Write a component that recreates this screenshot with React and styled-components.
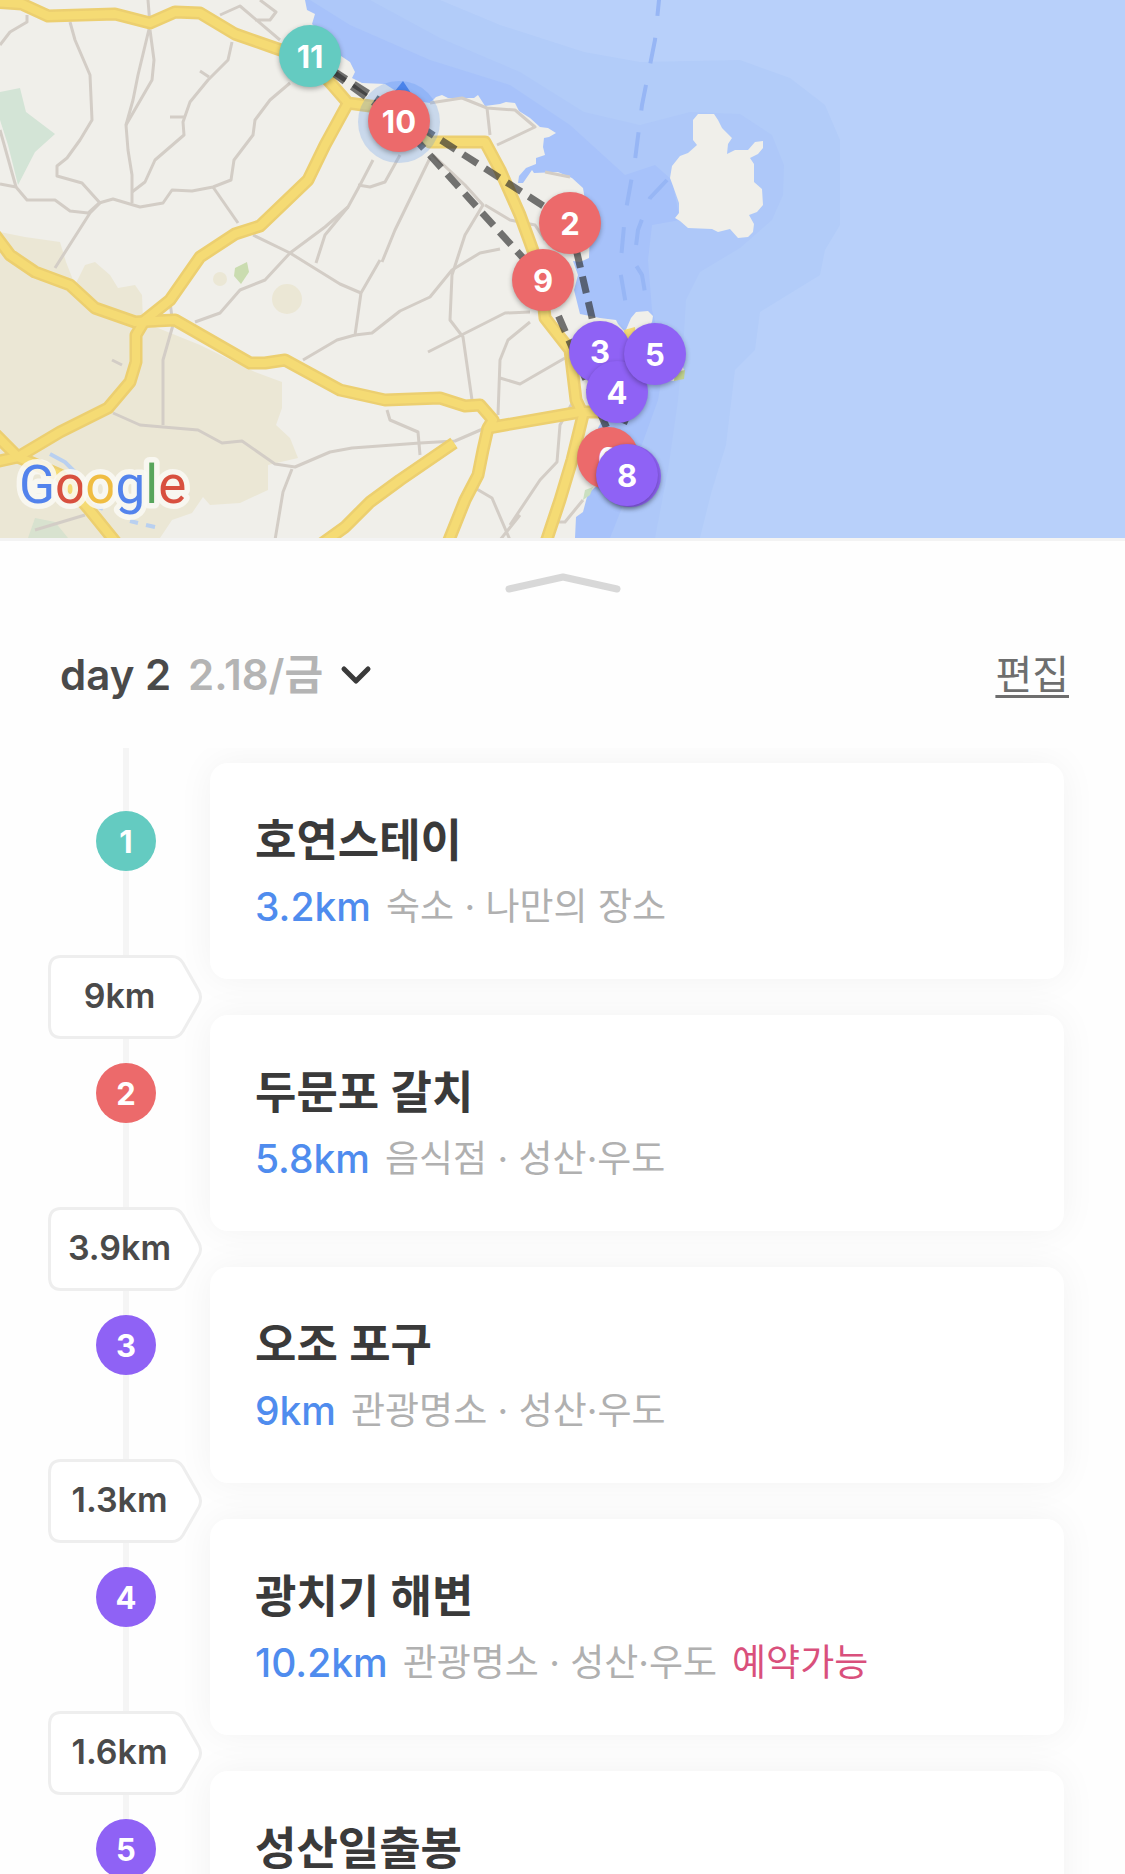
import React from 'react';
import styled, { createGlobalStyle } from 'styled-components';

const TEAL = '#64cbc1';
const RED = '#ec6a6b';
const PURPLE = '#8f62f5';

const pins = [
  { id: 2, x: 570, y: 223, color: RED },
  { id: 9, x: 543, y: 280, color: RED },
  { id: 10, x: 399, y: 121, color: RED },
  { id: 11, x: 310, y: 56, color: TEAL },
  { id: 3, x: 600, y: 352, color: PURPLE },
  { id: 4, x: 617, y: 392, color: PURPLE },
  { id: 5, x: 655, y: 354, color: PURPLE },
  { id: 6, x: 608, y: 458, color: RED },
  { id: 7, x: 630, y: 476, color: PURPLE, covered: true },
  { id: 8, x: 627, y: 475, color: PURPLE },
];

const places = [
  { name: '호연스테이', away: '3.2km', info: '숙소 · 나만의 장소', color: TEAL, next: '9km' },
  { name: '두문포 갈치', away: '5.8km', info: '음식점 · 성산·우도', color: RED, next: '3.9km' },
  { name: '오조 포구', away: '9km', info: '관광명소 · 성산·우도', color: PURPLE, next: '1.3km' },
  { name: '광치기 해변', away: '10.2km', info: '관광명소 · 성산·우도', color: PURPLE, next: '1.6km', booking: '예약가능' },
  { name: '성산일출봉', color: PURPLE },
];

const mainRoads = [
  'M-5 2L22 4L48 16L115 14L150 23L175 12L200 13L235 34L275 48L310 60L335 88L348 103L385 108L430 142L485 142L500 170L520 215L540 270L545 318L570 350L576 400L583 415L572 460L560 500L545 545',
  'M348 103L325 145L308 180L260 226L235 234L200 257L170 300L145 320L136 335L136 362L130 382L108 408L60 432L18 457L-5 462',
  'M-5 235L10 255L35 272L70 285L95 308L135 322L175 320L250 363L265 363L285 360L340 390L385 400L440 398L465 406L480 405L493 420L488 428L580 412L606 412',
  'M488 428L483 450L478 475L465 500L447 545',
  'M454 443L400 480L370 502L345 527L320 545',
  'M-5 434L18 457L60 475L88 508L118 545',
];

const lanes = [
  'M27 15L27 22L10 32L0 45',
  'M70 22L75 40L90 75L92 120L80 140L67 158L57 166L57 176L82 183L100 203L90 213L55 268',
  'M148 0L150 25L138 75L133 100L126 125L128 150L132 175L132 203',
  'M150 30L154 60L152 80L126 125',
  'M232 42L228 60L208 80L190 102L183 122L184 135L155 160L145 182L132 192',
  'M170 117L184 117M200 71L209 77',
  'M290 83L270 100L255 120L253 135L234 160L231 180L213 187L192 191L172 190L163 203L140 207L113 199L99 203L88 213L70 211L55 200L27 200L16 187L0 184',
  'M0 130L16 187',
  'M213 187L238 223',
  'M253 235L290 253L340 284L361 293',
  'M220 15L240 6L280 40M260 0L276 12L270 20L255 20',
  'M373 160L360 185L348 207L325 227L290 253L265 280L240 290L220 313L195 322',
  'M400 155L385 182L370 187L358 185',
  'M348 207L325 235L316 263',
  'M430 158L395 230L382 262M380 260L361 293L355 335L337 340L303 360',
  'M355 335L372 333L400 311L430 297L452 270L480 253L500 249',
  'M433 155L465 185L483 205L465 235L452 275L450 320L463 337L472 400',
  'M428 352L505 313L530 312M497 145L535 127L515 110L487 108L462 98L430 103',
  'M487 108L490 135M485 205L510 220L535 225L545 240',
  'M530 322L508 340L500 360L498 415M500 378L520 384L565 358',
  'M170 302L173 325L163 360L163 425',
  'M113 413L140 425L163 427L198 430L222 443L242 441L275 464L295 467L330 452L352 448L420 443L455 441L485 428',
  'M387 410L390 420L418 432L420 455',
  'M292 469L283 492L275 540',
  'M475 488L492 498L510 540M510 525L540 480L557 462L560 425L575 398M520 515L500 540',
  'M570 177L545 172M583 500L565 522L550 522M35 530L85 515',
  'M112 360L122 365',
];

const GlobalStyle = createGlobalStyle`
  * {
    box-sizing: border-box;
  }
  body {
    margin: 0;
    background: #fefefe;
    font-family: Inter, "Noto Sans CJK KR", sans-serif;
  }
`;

function MapDrawing() {
  return (
    <MapSvg viewBox="0 0 1125 538" aria-hidden="true">
      <rect width="1125" height="538" fill="#b8d0fa" />
      <path
        fill="#b2ccf9"
        d="M0 0H440L500 25L584 52L640 62L740 60L790 78L825 105L840 140L840 225L825 250L820 275L760 312L755 350L735 370L726 445L712 490L700 538H0Z"
      />
      <path
        fill="#aec8f9"
        d="M0 0H370L440 38L520 72L584 112L640 125L690 112L740 114L772 135L784 165L783 195L772 220L740 248L700 272L686 300L683 350L678 400L668 470L655 538H0Z"
      />
      <path
        fill="#a7c2fa"
        d="M0 0H310L350 25L430 60L510 85L570 125L625 175L655 165L672 180L680 220L652 225L648 260L652 310L665 360L658 400L640 450L625 500L610 538H0Z"
      />
      <g fill="none" stroke="#97b6f5" strokeWidth="4" strokeDasharray="26 22">
        <path d="M660 -10L655 40L642 105L635 160L625 215L620 270L626 305" />
        <path d="M667 180L650 198L638 230L634 262L642 275L648 310" />
      </g>

      <path
        fill="#f0efea"
        d="M0 0H305L307 10L315 14L312 24L322 34L335 52L350 62L355 72L352 78L362 83L385 84L410 100L430 103L436 97L442 95L448 98L474 98L478 95L485 106L500 104L506 102L515 103L519 111L530 118L540 127L548 128L556 133L549 137L544 138L543 147L545 155L536 158L536 164L526 168L519 176L518 183L523 183L532 170L534 173L558 172L572 178L583 188L590 230L589 258L580 262L573 261L578 275L574 290L580 314L600 318L616 320L618 324L625 332L631 318L636 312L648 311L653 316L652 322L645 332L675 345L684 370L684 378L674 381L640 380L610 405L598 428L602 450L598 485L588 493L583 512L576 517L575 538H0Z"
      />
      <path
        fill="#f0efea"
        d="M693 120L698 114L706 114L714 114L718 120L722 128L732 138L728 144L727 154L735 150L748 150L755 142L763 141L763 148L758 154L750 158L754 164L754 182L762 189L763 205L757 212L749 215L754 224L753 232L748 237L738 238L730 229L718 232L712 229L688 228L680 221L675 218L679 213L679 203L673 186L670 178L672 166L680 156L688 153L697 145L693 140Z"
      />
      <path
        fill="#ebe7d5"
        d="M0 232L25 237L60 242L66 262L75 285L85 265L95 262L110 275L118 288L135 285L142 295L143 322L200 345L255 372L282 382L282 408L276 425L290 438L298 458L268 465L268 490L240 503L210 505L203 497L192 513L172 520L160 538H0Z"
      />
      <circle cx="287" cy="299" r="15" fill="#ebe7d5" />
      <circle cx="220" cy="279" r="7" fill="#ebe7d5" />
      <path fill="#d3e4d6" d="M0 92L20 88L26 112L55 134L35 152L18 185L8 145L0 120Z" />
      <path fill="#cadcb0" d="M235 268L247 262L249 272L241 284L234 276Z" />
      <path fill="#d8e2cf" d="M35 518L55 522L68 538H28Z" />
      <path fill="#c1d290" d="M675 372L685 370L684 379L674 381Z" />
      <path fill="#cadfc0" d="M585 490L593 487L590 495L583 500Z" />
      <path fill="#f4da75" d="M624 330L635 327L636 340L625 342Z" />
      <path fill="none" stroke="#b9d0f0" strokeWidth="4" d="M50 454L65 462L78 475M130 521L138 523M146 525L155 527M94 505L103 509" />

      <g fill="none" stroke="#d3cdc6" strokeWidth="3" strokeLinejoin="round">
        {lanes.map((d) => <path key={d} d={d} />)}
      </g>
      <g fill="none" stroke="#eccf70" strokeWidth="13" strokeLinejoin="round">
        {mainRoads.map((d) => <path key={d} d={d} />)}
      </g>
      <g fill="none" stroke="#f5db74" strokeWidth="8" strokeLinejoin="round">
        {mainRoads.map((d) => <path key={d} d={d} />)}
      </g>

      {/* route between the stops */}
      <g fill="none" stroke="#2d2d2d" strokeOpacity="0.65" strokeWidth="7" strokeDasharray="17 9">
        <path d="M310 56L570 223L600 352L617 392L655 354L608 458" />
        <path d="M627 475L543 280L399 121L310 56" />
      </g>
      <circle cx="399" cy="122" r="41" fill="#4f8ef0" fillOpacity="0.24" />
      <path fill="#4a83ea" d="M403 81L413 96H391Z" />

      <Logo x="19" y="503">
        <tspan fill="#5383ec">G</tspan>
        <tspan fill="#d8503f">o</tspan>
        <tspan fill="#f0bd42">o</tspan>
        <tspan fill="#5383ec">g</tspan>
        <tspan fill="#58a55c">l</tspan>
        <tspan fill="#d8503f">e</tspan>
      </Logo>
    </MapSvg>
  );
}

function Stop({ place, index }) {
  return (
    <Row>
      <Rail>
        <Dot $color={place.color}>{index + 1}</Dot>
        {place.next && (
          <Distance>
            <svg width="154" height="84" viewBox="0 0 154 84" aria-hidden="true">
              <path
                d="M13 1.5H124Q131 1.5 135 8L151 36Q154 42 151 48L135 76Q131 82.5 124 82.5H13Q1.5 82.5 1.5 70V14Q1.5 1.5 13 1.5Z"
                fill="#fff"
                stroke="#eee"
                strokeWidth="3"
              />
            </svg>
            <span>{place.next}</span>
          </Distance>
        )}
      </Rail>
      <Card>
        <Name>{place.name}</Name>
        {place.info && (
          <Details>
            <Away>{place.away}</Away>
            <span>{place.info}</span>
            {place.booking && <Booking>{place.booking}</Booking>}
          </Details>
        )}
      </Card>
    </Row>
  );
}

function App() {
  return (
    <Page>
      <GlobalStyle />
      <MapArea>
        <MapDrawing />
        {pins.map((pin) => (
          <Pin
            key={pin.id}
            type="button"
            aria-label={`${pin.id}`}
            $color={pin.color}
            style={{ left: `${(pin.x / 1125) * 100}%`, top: `${(pin.y / 538) * 100}%` }}
          >
            {!pin.covered && pin.id}
          </Pin>
        ))}
      </MapArea>
      <Handle type="button" aria-label="목록 펼치기">
        <svg width="116" height="22" viewBox="0 0 116 22">
          <path d="M4 16L58 4L112 16" fill="none" stroke="#d8d8d8" strokeWidth="7" strokeLinecap="round" strokeLinejoin="round" />
        </svg>
      </Handle>
      <Header>
        <DayButton type="button">
          <strong>day 2</strong>
          <DayDate>2.18/금</DayDate>
          <svg width="32" height="20" viewBox="0 0 32 20" aria-hidden="true">
            <path d="M4 4L16 16L28 4" fill="none" stroke="#3a3a3a" strokeWidth="5" strokeLinecap="round" strokeLinejoin="round" />
          </svg>
        </DayButton>
        <EditLink href="#">편집</EditLink>
      </Header>
      <Scroller>
        <List>
          {places.map((place, index) => (
            <Stop key={place.name} place={place} index={index} />
          ))}
        </List>
      </Scroller>
    </Page>
  );
}
export default App;

const Page = styled.main`
  display: flex;
  flex-direction: column;
  height: 100vh;
  overflow: hidden;
`;

const MapArea = styled.section`
  position: relative;
  flex: none;
  overflow: hidden;
  border-bottom: 3px solid #f3f3f3;
`;

const MapSvg = styled.svg`
  display: block;
  width: 100%;
`;

const Logo = styled.text`
  font-family: Roboto, sans-serif;
  font-size: 53px;
  font-weight: 400;
  stroke: rgba(250, 249, 244, 0.85);
  stroke-width: 11px;
  stroke-linejoin: round;
  paint-order: stroke;
`;

const Pin = styled.button`
  position: absolute;
  width: 62px;
  height: 62px;
  padding: 0;
  border: 0;
  border-radius: 50%;
  transform: translate(-50%, -50%);
  background: ${(props) => props.$color};
  box-shadow: 0 2px 5px rgba(0, 0, 0, 0.3);
  color: #fff;
  font: inherit;
  font-size: 31px;
  font-weight: 700;
`;

const Handle = styled.button`
  display: flex;
  flex: none;
  justify-content: center;
  padding: 32px 0 0;
  border: 0;
  background: none;
`;

const Header = styled.header`
  display: flex;
  flex: none;
  align-items: center;
  justify-content: space-between;
  height: 153px;
  padding: 6px 56px 0 60px;
`;

const DayButton = styled.button`
  display: flex;
  align-items: center;
  gap: 17px;
  padding: 0;
  border: 0;
  background: none;
  color: #4a4a4a;
  font: inherit;
  font-size: 42px;
  line-height: 60px;

  strong {
    font-weight: 600;
  }
`;

const DayDate = styled.span`
  color: #b4b4b4;
  font-weight: 600;
`;

const EditLink = styled.a`
  color: #6e6e6e;
  font-size: 40px;
  line-height: 60px;
  text-decoration: underline;
  text-decoration-thickness: 3px;
  text-underline-offset: 6px;
`;

const Scroller = styled.div`
  flex: 1;
  min-height: 0;
  overflow-y: auto;
  scrollbar-width: none;
`;

const List = styled.ol`
  margin: 0;
  padding: 15px 61px 0 48px;
  list-style: none;
  background: linear-gradient(#f5f5f5, #f5f5f5) 123px 0 / 6px 100% no-repeat;
`;

const Row = styled.li`
  display: grid;
  grid-template-columns: 162px 1fr;
  align-items: start;
  margin-bottom: 36px;
`;

const Rail = styled.div`
  z-index: 1;
  display: flex;
  flex-direction: column;
  gap: 84px;
  height: 216px;
  padding-top: 48px;
`;

const Dot = styled.span`
  display: flex;
  flex: none;
  align-items: center;
  justify-content: center;
  width: 60px;
  height: 60px;
  margin-left: 48px;
  border-radius: 50%;
  background: ${(props) => props.$color};
  color: #fff;
  font-size: 31px;
  font-weight: 700;
`;

const Distance = styled.div`
  display: grid;
  width: 154px;
  height: 84px;
  color: #4a4a4a;
  font-size: 34px;
  font-weight: 600;
  line-height: 82px;

  svg,
  span {
    grid-area: 1 / 1;
  }
  span {
    padding-right: 11px;
    text-align: center;
  }
`;

const Card = styled.article`
  min-height: 216px;
  padding: 48px 45px 0;
  border-radius: 18px;
  background: #fff;
  box-shadow: 0 0 36px rgba(0, 0, 0, 0.05);
`;

const Name = styled.h2`
  margin: 0;
  color: #3a3a3a;
  font-size: 45px;
  font-weight: 600;
  line-height: 60px;
`;

const Details = styled.p`
  display: flex;
  gap: 15px;
  margin: 6px 0 0;
  color: #b0b0b0;
  font-size: 37px;
  line-height: 60px;
`;

const Away = styled.span`
  color: #4f8cee;
  font-size: 39px;
  font-weight: 500;
`;

const Booking = styled.span`
  color: #d9507c;
`;
